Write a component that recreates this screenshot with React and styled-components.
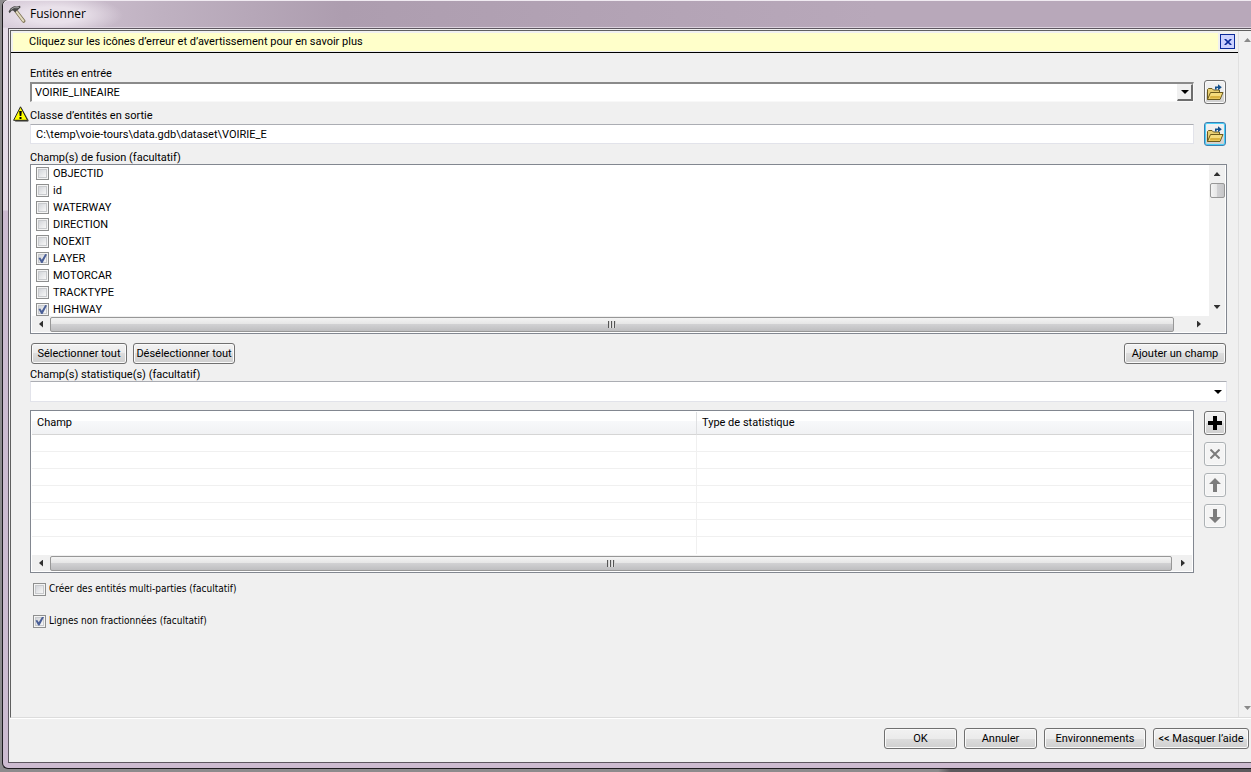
import React, { useState } from 'react';
import styled, { createGlobalStyle, css } from 'styled-components';

const fields = [
  { name: 'OBJECTID' },
  { name: 'id' },
  { name: 'WATERWAY' },
  { name: 'DIRECTION' },
  { name: 'NOEXIT' },
  { name: 'LAYER', checked: true },
  { name: 'MOTORCAR' },
  { name: 'TRACKTYPE' },
  { name: 'HIGHWAY', checked: true },
];

const emptyRows = [1, 2, 3, 4, 5, 6, 7];

function HammerIcon() {
  return (
    <svg width="18" height="18" viewBox="0 0 18 18" aria-hidden="true">
      <path d="M8 6 L15.6 16" stroke="#7d7252" strokeWidth="3.6" strokeLinecap="round" />
      <path d="M8 6 L15.4 15.8" stroke="#e2dac0" strokeWidth="2" strokeLinecap="round" />
      <path d="M0.6 6.4 L2.6 3.2 L6 1.2 L9 1.6 L12 0.8 L12.6 2.2 L10.4 4.6 L9 5.4 L7.4 7.2 L5 5.6 L3.6 5.8 L1.6 8.2 Z" fill="#474747" />
      <path d="M2.6 4.8 L6 2.6 L9 2.8 L11 2.2" stroke="#a4a4a4" strokeWidth="1" fill="none" />
    </svg>
  );
}

function WarningIcon() {
  return (
    <svg width="16" height="16" viewBox="0 0 16 16" aria-hidden="true">
      <path d="M8.5 1.5 L15.8 14.5 L15 15.8 H2 Z" fill="#6e6e6e" />
      <path d="M7.5 0.8 L14.6 14.3 L0.6 14.3 Z" fill="#ffff00" stroke="#222" strokeWidth="1" strokeLinejoin="round" />
      <path d="M6.2 5 h2.6 l-0.5 5 h-1.6 Z" fill="#000" />
      <rect x="6.5" y="11" width="2" height="2" fill="#000" />
    </svg>
  );
}

function FolderIcon() {
  return (
    <svg width="18" height="17" viewBox="0 0 18 17" aria-hidden="true">
      <path d="M1.5 15.5 V5.5 L2.5 4.5 H6 L7.5 6 H13.5 V9" fill="#e9cf72" stroke="#6b5a1c" />
      <path d="M1.5 15.5 L4.5 8.5 H17 L14 15.5 Z" fill="#f5dc7c" stroke="#6b5a1c" strokeLinejoin="round" />
      <path d="M3.5 14.5 H13.5 L14.6 12 H4.6 Z" fill="#d9b23f" />
      <path d="M9.8 5.4 V3.2 H13" fill="none" stroke="#14508c" strokeWidth="1.6" />
      <path d="M12 0.2 L15.8 3.2 L12 6.2 Z" fill="#14508c" />
    </svg>
  );
}

function PlusIcon() {
  return (
    <svg width="14" height="14" viewBox="0 0 14 14" aria-hidden="true">
      <path d="M5 0 H9 V5 H14 V9 H9 V14 H5 V9 H0 V5 H5 Z" fill="#000" />
    </svg>
  );
}

function CrossIcon() {
  return (
    <svg width="10" height="10" viewBox="0 0 10 10" aria-hidden="true">
      <path d="M0.5 0.5 L9.5 9.5 M9.5 0.5 L0.5 9.5" stroke="#7c7c7c" strokeWidth="2" />
    </svg>
  );
}

function ArrowIcon({ down }) {
  return (
    <svg width="12" height="14" viewBox="0 0 12 14" aria-hidden="true">
      <path
        d={down ? 'M4 0 H8 V8 H12 L6 14 L0 8 H4 Z' : 'M4 14 H8 V6 H12 L6 0 L0 6 H4 Z'}
        fill="#7c7c7c"
      />
    </svg>
  );
}

function CloseIcon() {
  return (
    <svg width="8" height="6" viewBox="0 0 8 6" aria-hidden="true">
      <path d="M0.8 0 L7.2 6 M7.2 0 L0.8 6" stroke="#0a2a9a" strokeWidth="1.7" />
    </svg>
  );
}

function VerticalScroll() {
  return (
    <VBar>
      <Triangle $dir="up" />
      <VThumb />
      <Spacer />
      <Triangle $dir="down" />
    </VBar>
  );
}

function HorizontalScroll({ gap }) {
  return (
    <HBar>
      <ArrowBox><Triangle $dir="left" /></ArrowBox>
      <HThumb><Grip /></HThumb>
      <ArrowBox $gap={gap}><Triangle $dir="right" /></ArrowBox>
    </HBar>
  );
}

export default function App() {
  const [checked, setChecked] = useState(
    fields.filter((f) => f.checked).map((f) => f.name)
  );
  const [multi, setMulti] = useState(false);
  const [unsplit, setUnsplit] = useState(true);
  const [output, setOutput] = useState('C:\\temp\\voie-tours\\data.gdb\\dataset\\VOIRIE_E');

  const toggle = (name) =>
    setChecked(checked.includes(name) ? checked.filter((n) => n !== name) : [...checked, name]);

  return (
    <Backdrop>
      <GlobalStyle />
      <Window>
        <TitleBar>
          <HammerIcon />
          <Title>Fusionner</Title>
        </TitleBar>
        <Client>
          <Main>
            <Panel>
              <Notice>
                <NoticeText>Cliquez sur les icônes d’erreur et d’avertissement pour en savoir plus</NoticeText>
                <CloseButton type="button" aria-label="Fermer"><CloseIcon /></CloseButton>
              </Notice>
              <Form>
                <Label htmlFor="input-features">Entités en entrée</Label>
                <FieldRow>
                  <ComboWrap>
                    <Combo id="input-features" defaultValue="VOIRIE_LINEAIRE">
                      <option>VOIRIE_LINEAIRE</option>
                    </Combo>
                    <ComboArrow><Caret /></ComboArrow>
                  </ComboWrap>
                  <IconButton type="button" aria-label="Parcourir"><FolderIcon /></IconButton>
                </FieldRow>

                <Label htmlFor="output-class">
                  <Warning><WarningIcon /></Warning>
                  Classe d’entités en sortie
                </Label>
                <FieldRow>
                  <TextInput id="output-class" value={output} onChange={(e) => setOutput(e.target.value)} />
                  <IconButton type="button" aria-label="Parcourir" $active><FolderIcon /></IconButton>
                </FieldRow>

                <Label as="div" id="merge-fields">Champ(s) de fusion (facultatif)</Label>
                <ListBox role="group" aria-labelledby="merge-fields">
                  <ListBody>
                    <Items>
                      {fields.map((f) => (
                        <Item key={f.name}>
                          <Check
                            type="checkbox"
                            checked={checked.includes(f.name)}
                            onChange={() => toggle(f.name)}
                          />
                          {f.name}
                        </Item>
                      ))}
                    </Items>
                    <VerticalScroll />
                  </ListBody>
                  <BarRow>
                    <HorizontalScroll gap={16} />
                    <Corner />
                  </BarRow>
                </ListBox>

                <Actions>
                  <Button type="button" $size="medium" onClick={() => setChecked(fields.map((f) => f.name))}>
                    Sélectionner tout
                  </Button>
                  <Button type="button" $size="large" onClick={() => setChecked([])}>
                    Désélectionner tout
                  </Button>
                  <Spacer />
                  <Button type="button" $size="large">Ajouter un champ</Button>
                </Actions>

                <Label htmlFor="stat-fields">Champ(s) statistique(s) (facultatif)</Label>
                <ComboWrap>
                  <FlatCombo id="stat-fields" defaultValue="">
                    <option value="" />
                  </FlatCombo>
                  <ComboArrow $flat><Caret /></ComboArrow>
                </ComboWrap>

                <StatRow>
                  <TableBox>
                    <Table>
                      <colgroup>
                        <FirstCol />
                        <col />
                      </colgroup>
                      <thead>
                        <tr>
                          <Th>Champ</Th>
                          <Th>Type de statistique</Th>
                        </tr>
                      </thead>
                      <tbody>
                        {emptyRows.map((r) => (
                          <tr key={r}>
                            <Td />
                            <Td />
                          </tr>
                        ))}
                      </tbody>
                    </Table>
                    <HorizontalScroll gap={2} />
                  </TableBox>
                  <Tools>
                    <IconButton type="button" aria-label="Ajouter"><PlusIcon /></IconButton>
                    <IconButton type="button" aria-label="Supprimer" disabled><CrossIcon /></IconButton>
                    <IconButton type="button" aria-label="Monter" disabled><ArrowIcon /></IconButton>
                    <IconButton type="button" aria-label="Descendre" disabled><ArrowIcon down /></IconButton>
                  </Tools>
                </StatRow>

                <Options>
                  <Option>
                    <Check type="checkbox" checked={multi} onChange={() => setMulti(!multi)} />
                    Créer des entités multi-parties (facultatif)
                  </Option>
                  <Option>
                    <Check type="checkbox" checked={unsplit} onChange={() => setUnsplit(!unsplit)} />
                    Lignes non fractionnées (facultatif)
                  </Option>
                </Options>
              </Form>
            </Panel>
            <PageBar>
              <Triangle $dir="up" $muted />
              <Triangle $dir="down" $muted />
            </PageBar>
          </Main>
          <Footer>
            <Button type="button" $size="small">OK</Button>
            <Button type="button" $size="small">Annuler</Button>
            <Button type="button" $size="large">Environnements</Button>
            <Button type="button" $size="medium">&lt;&lt; Masquer l’aide</Button>
          </Footer>
        </Client>
      </Window>
    </Backdrop>
  );
}

const GlobalStyle = createGlobalStyle`
  * {
    box-sizing: border-box;
  }
  body {
    margin: 0;
    background: #6b686b;
  }
  body, button, input, select {
    font-family: Roboto, sans-serif;
    font-size: 11px;
    line-height: 14px;
    color: #000;
  }
`;

const Backdrop = styled.div`
  min-height: 100vh;
  display: flex;
  padding: 0 0 3px 2px;
  overflow: hidden;
  background: linear-gradient(90deg, #8d8b8d 0, #8d8b8d 75%, #5d595d 76%);
`;

const Window = styled.div`
  flex: 1;
  min-width: 0;
  display: flex;
  flex-direction: column;
  padding: 0 0 5px 5px;
  border: solid #1d1a1e;
  border-width: 0 0 1px 1px;
  border-radius: 6px 0 0 6px;
  background: linear-gradient(180deg, #e6dce8 0, #e2d8e4 210px, #cdbbd0 211px);
`;

const TitleBar = styled.header`
  display: flex;
  align-items: center;
  gap: 4px;
  height: 28px;
  margin-left: -5px;
  padding-left: 5px;
  border-top: 1px solid #f0eaf1;
  border-bottom: 1px solid #dcd2de;
  border-radius: 6px 0 0 0;
  background:
    radial-gradient(ellipse 70px 20px at 50px 14px, #e9e1ea 40%, transparent 100%),
    linear-gradient(90deg, #d5c8d7 0, #bfb1c1 160px, #ad9daf 340px, #b8a8ba 70%, #b8a8ba);
`;

const Title = styled.h1`
  margin: 0;
  font-family: 'Open Sans', sans-serif;
  font-size: 12px;
  font-weight: 400;
  line-height: 16px;
`;

const Client = styled.main`
  flex: 1;
  display: flex;
  flex-direction: column;
  border: solid #5d565f;
  border-width: 1px 0 1px 1px;
  background: #f0f0f0;
`;

const Main = styled.div`
  flex: 1;
  display: flex;
  border: 1px solid #5f5f5f;
  border-right: 0;
  border-bottom: 1px solid #dcdcdc;
  box-shadow: 0 1px 0 #fff;
  margin: 1px 0 0 1px;
`;

const Panel = styled.div`
  flex: 1;
  min-width: 0;
`;

const Notice = styled.div`
  display: flex;
  align-items: center;
  gap: 2px;
  height: 22px;
  padding: 2px 3px 2px 2px;
  border-bottom: 1px solid #000;
`;

const NoticeText = styled.p`
  flex: 1;
  margin: 0;
  padding: 2px 0 2px 16px;
  background: #ffffca;
`;

const CloseButton = styled.button`
  width: 15px;
  height: 15px;
  padding: 0;
  display: flex;
  align-items: center;
  justify-content: center;
  border: 1px solid #0a2a9a;
  background: #ccd2ff;
`;

const Form = styled.form`
  display: flex;
  flex-direction: column;
  padding: 14px 11px 0 19px;
`;

const Label = styled.label`
  position: relative;
  height: 13px;
`;

const Warning = styled.span`
  position: absolute;
  left: -17px;
  top: -3px;
`;

const FieldRow = styled.div`
  display: flex;
  align-items: center;
  gap: 10px;
  height: 24px;
  margin-bottom: 5px;
  padding-right: 1px;
`;

const ComboWrap = styled.div`
  position: relative;
  flex: 1;
  min-width: 0;
  display: flex;
`;

const Combo = styled.select`
  appearance: none;
  width: 100%;
  height: 20px;
  padding: 0 20px 0 3px;
  border: solid #f8f8f8;
  border-width: 2px 1px 1px 2px;
  border-top-color: #8a8a8a;
  border-left-color: #8a8a8a;
  border-radius: 0;
  background: #fff;
`;

const FlatCombo = styled(Combo)`
  height: 21px;
  border: 1px solid #e2e3ea;
  border-top-color: #abadb3;
`;

const ComboArrow = styled.span`
  position: absolute;
  top: 2px;
  right: 1px;
  width: 16px;
  height: 17px;
  display: flex;
  align-items: center;
  justify-content: center;
  pointer-events: none;
  ${({ $flat }) => !$flat && css`
    background: #f0f0f0;
    border: 1px solid #f0f0f0;
    border-right: 2px solid #6d6d6d;
    border-bottom: 2px solid #6d6d6d;
  `}
`;

const Caret = styled.span`
  border: 4px solid transparent;
  border-top-color: #000;
  border-bottom: 0;
`;

const TextInput = styled.input`
  flex: 1;
  min-width: 0;
  height: 20px;
  padding: 0 5px;
  border: 1px solid #e2e3ea;
  border-top-color: #abadb3;
  background: #fff;
`;

const IconButton = styled.button`
  flex: none;
  width: 22px;
  height: 24px;
  padding: 0;
  display: flex;
  align-items: center;
  justify-content: center;
  border: 1px solid #707070;
  border-radius: 3px;
  background: linear-gradient(180deg, #f2f2f2 0, #ebebeb 50%, #dddddd 50%, #cfcfcf 100%);
  box-shadow: inset 0 0 0 1px ${({ $active }) => ($active ? '#48d0f8' : '#fafafa')};
  ${({ $active }) => $active && css`
    border-color: #3c7fb1;
  `}
  &:disabled {
    border-color: #adb2b5;
    background: #f4f4f4;
  }
`;

const ListBox = styled.div`
  height: 170px;
  display: flex;
  flex-direction: column;
  padding: 0 1px 1px;
  border: 1px solid #828790;
  background: #fff;
`;

const ListBody = styled.div`
  flex: 1;
  min-height: 0;
  display: flex;
`;

const Items = styled.div`
  flex: 1;
  overflow: hidden;
  padding-left: 4px;
`;

const Item = styled.label`
  display: flex;
  align-items: center;
  gap: 4px;
  height: 17px;
`;

const Check = styled.input`
  appearance: none;
  flex: none;
  width: 13px;
  height: 13px;
  margin: 0;
  border: 1px solid #8e8f8f;
  background: linear-gradient(135deg, #c9ccd2 0, #f6f6f6 80%);
  box-shadow: inset 0 0 0 1px #f4f4f4, inset 0 0 0 2px #c8cacd;
  &:checked::after {
    content: '';
    display: block;
    width: 9px;
    height: 9px;
    margin: 1px;
    background: #4a5f97;
    clip-path: polygon(5% 45%, 25% 40%, 42% 65%, 80% 0, 100% 5%, 50% 100%, 36% 100%);
  }
`;

const BarRow = styled.div`
  display: flex;
`;

const Corner = styled.div`
  width: 17px;
  background: #f0f0f0;
`;

const HBar = styled.div`
  flex: 1;
  display: flex;
  align-items: center;
  height: 16px;
  background: #f0f0f0;
`;

const ArrowBox = styled.div`
  width: 18px;
  display: flex;
  justify-content: center;
  margin-left: ${({ $gap }) => $gap || 0}px;
`;

const HThumb = styled.div`
  flex: 1;
  height: 15px;
  display: flex;
  align-items: center;
  justify-content: center;
  border: 1px solid #979797;
  border-radius: 2px;
  background: linear-gradient(180deg, #f4f4f4 0, #e6e6e6 45%, #d2d2d4 46%, #bebec0 100%);
`;

const Grip = styled.div`
  width: 8px;
  height: 7px;
  background: repeating-linear-gradient(90deg, #555 0, #555 1px, #ccc 1px, #f0f0f0 3px);
`;

const VBar = styled.div`
  width: 16px;
  display: flex;
  flex-direction: column;
  align-items: center;
  padding: 7px 0;
  background: #f0f0f0;
`;

const VThumb = styled.div`
  width: 15px;
  height: 15px;
  margin-top: 7px;
  border: 1px solid #979797;
  border-radius: 2px;
  background: linear-gradient(90deg, #f4f4f4 0, #e6e6e6 45%, #d2d2d4 46%, #c6c6c8 100%);
`;

const clips = {
  up: 'polygon(50% 0, 100% 100%, 0 100%)',
  down: 'polygon(0 0, 100% 0, 50% 100%)',
  left: 'polygon(100% 0, 100% 100%, 0 50%)',
  right: 'polygon(0 0, 100% 50%, 0 100%)',
};

const isVertical = (dir) => dir === 'up' || dir === 'down';

const Triangle = styled.span`
  flex: none;
  width: ${({ $dir }) => (isVertical($dir) ? 7 : 4)}px;
  height: ${({ $dir }) => (isVertical($dir) ? 4 : 7)}px;
  background: ${({ $muted }) => ($muted ? '#8a8a8a' : '#303030')};
  clip-path: ${({ $dir }) => clips[$dir]};
`;

const Spacer = styled.div`
  flex: 1;
`;

const Actions = styled.div`
  display: flex;
  gap: 6px;
  margin: 9px 1px 4px;
`;

const widths = { small: 73, medium: 96, large: 102 };

const Button = styled.button`
  width: ${({ $size }) => widths[$size]}px;
  height: 21px;
  padding: 0;
  white-space: nowrap;
  border: 1px solid #707070;
  border-radius: 3px;
  background: linear-gradient(180deg, #f2f2f2 0, #ebebeb 50%, #dddddd 50%, #cfcfcf 100%);
  box-shadow: inset 0 0 0 1px #fafafa;
`;

const StatRow = styled.div`
  display: flex;
  align-items: flex-start;
  gap: 10px;
  margin-top: 8px;
  padding-right: 1px;
`;

const TableBox = styled.div`
  flex: 1;
  min-width: 0;
  height: 163px;
  display: flex;
  flex-direction: column;
  justify-content: space-between;
  padding: 1px;
  border: 1px solid #828790;
  background: #fff;
  > ${HBar} {
    flex: none;
  }
`;

const Table = styled.table`
  width: 100%;
  table-layout: fixed;
  border-collapse: separate;
  border-spacing: 0;
`;

const FirstCol = styled.col`
  width: 665px;
`;

const Th = styled.th`
  height: 23px;
  padding: 0 5px;
  text-align: left;
  font-weight: 400;
  border-bottom: 1px solid #d5d5d5;
  border-right: 1px solid #dfe0e2;
  background: linear-gradient(180deg, #fff 0, #fff 40%, #f7f8fa 41%, #f1f2f4 100%);
  &:last-child {
    border-right: 0;
  }
`;

const Td = styled.td`
  height: 17px;
  padding: 0;
  border-bottom: 1px solid #f0f0f0;
  border-right: 1px solid #f0f0f0;
  &:last-child {
    border-right: 0;
  }
  tr:last-child > & {
    border-bottom: 0;
  }
`;

const Tools = styled.div`
  display: flex;
  flex-direction: column;
  gap: 7px;
  padding: 1px 0;
`;

const Options = styled.div`
  display: flex;
  flex-direction: column;
  align-items: flex-start;
  gap: 18px;
  padding: 9px 3px;
`;

const Option = styled.label`
  display: flex;
  align-items: center;
  gap: 3px;
  font-family: 'DejaVu Sans Condensed', 'DejaVu Sans', sans-serif;
  font-size: 10px;
`;

const PageBar = styled.div`
  flex: none;
  width: 13px;
  display: flex;
  flex-direction: column;
  align-items: flex-end;
  justify-content: space-between;
  padding: 7px 0;
  border-left: 1px solid #e0e0e0;
  background: #f1f1f1;
`;

const Footer = styled.footer`
  display: flex;
  justify-content: flex-end;
  gap: 7px;
  padding: 10px 2px 13px;
`;
